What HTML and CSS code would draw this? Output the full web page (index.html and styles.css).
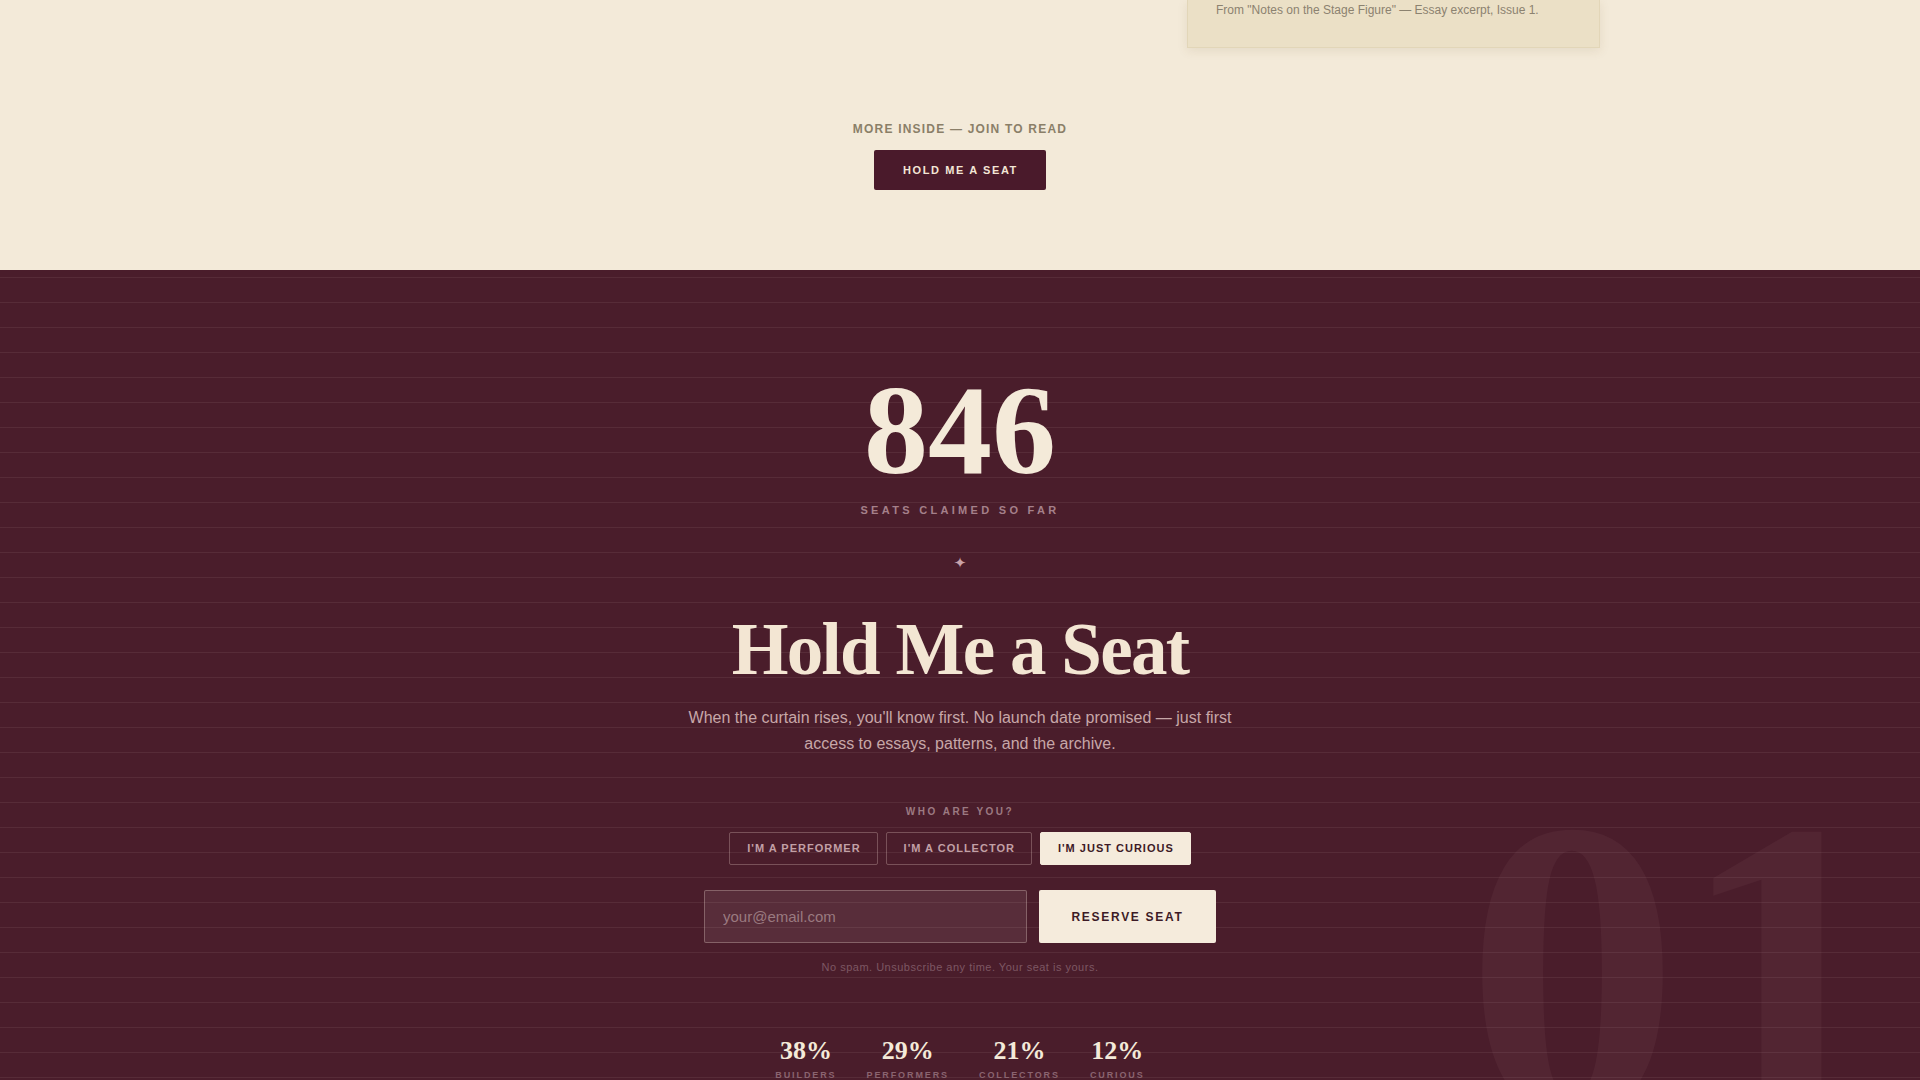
FILE: index.html
```html
<!DOCTYPE html>
<html lang="en">
<head>
    <meta charset="UTF-8">
    <meta name="viewport" content="width=device-width, initial-scale=1.0">
    <title>Hold Me a Seat</title>
    <link rel="stylesheet" href="styles.css">
</head>
<body>

    <section class="teaser">
        <div class="teaser-grid">
            <div class="teaser-copy"></div>
            <figure class="excerpt">
                <figcaption>From "Notes on the Stage Figure" — Essay excerpt, Issue 1.</figcaption>
            </figure>
        </div>

        <div class="teaser-cta">
            <p class="kicker">More inside — join to read</p>
            <a class="btn-dark" href="#seat">Hold me a seat</a>
        </div>
    </section>

    <section class="seat" id="seat">
        <span class="seat-watermark" aria-hidden="true">01</span>

        <div class="counter">846</div>
        <p class="counter-label">Seats claimed so far</p>
        <div class="ornament">✦</div>

        <h2 class="seat-title">Hold Me a Seat</h2>
        <p class="lede">When the curtain rises, you'll know first. No launch date promised — just first access to essays, patterns, and the archive.</p>

        <p class="who">Who are you?</p>
        <div class="roles">
            <button type="button" class="role">I'm a performer</button>
            <button type="button" class="role">I'm a collector</button>
            <button type="button" class="role active">I'm just curious</button>
        </div>

        <form class="signup" id="signup-form">
            <input type="email" name="email" placeholder="your@email.com" required>
            <button type="submit">Reserve seat</button>
        </form>
        <p class="fine">No spam. Unsubscribe any time. Your seat is yours.</p>

        <div class="stats">
            <div class="stat"><strong>38%</strong><span>Builders</span></div>
            <div class="stat"><strong>29%</strong><span>Performers</span></div>
            <div class="stat"><strong>21%</strong><span>Collectors</span></div>
            <div class="stat"><strong>12%</strong><span>Curious</span></div>
        </div>
    </section>

    <script>
        // toggle the selected role
        document.querySelectorAll('.role').forEach(function(btn) {
            btn.addEventListener('click', function() {
                document.querySelectorAll('.role').forEach(function(b) { b.classList.remove('active'); });
                btn.classList.add('active');
            });
        });

        document.getElementById('signup-form').addEventListener('submit', function(event) {
            event.preventDefault();
            this.reset();
        });
    </script>
</body>
</html>
```

FILE: styles.css
```css
body {
    margin: 0;
    padding: 0;
    font-family: "Liberation Sans", Arial, sans-serif;
    background-color: #f3ead9;
    overflow-x: hidden;
}

/* cream teaser area */
.teaser {
    padding-bottom: 80px;
}
.teaser-grid {
    width: 1280px;
    margin: 0 auto;
    display: grid;
    grid-template-columns: 1fr 413px;
}
.excerpt {
    margin: 0;
    background-color: #ebe0c6;
    border: 1px solid #e2d6b8;
    border-top: none;
    box-shadow: 0 3px 10px rgba(110, 80, 30, 0.10);
    padding: 2px 28px 29px;
}
.excerpt figcaption {
    font-size: 12px;
    line-height: 16px;
    color: #8b8270;
}
.teaser-cta {
    margin-top: 73px;
    display: flex;
    flex-direction: column;
    align-items: center;
}
.kicker {
    margin: 0 0 13px;
    font-size: 12px;
    line-height: 16px;
    font-weight: bold;
    letter-spacing: 1.2px;
    text-transform: uppercase;
    color: #8a7f68;
}
.btn-dark {
    display: block;
    padding: 14px 28px 14px 29px;
    line-height: 12px;
    background-color: #4a1a2b;
    color: #f3e6d6;
    border-radius: 2px;
    font-size: 11px;
    font-weight: bold;
    letter-spacing: 1.6px;
    text-transform: uppercase;
    text-decoration: none;
}

/* dark signup section */
.seat {
    position: relative;
    overflow: hidden;
    padding: 96px 0 120px;
    background-color: #4a1d2b;
    background-image: repeating-linear-gradient(to bottom, transparent 0, transparent 24px, rgba(255, 235, 225, 0.07) 24px, rgba(255, 235, 225, 0.07) 25px);
    background-position: 0 -17px;
    display: flex;
    flex-direction: column;
    align-items: center;
    text-align: center;
    color: #f3e6d3;
}
.seat-watermark {
    position: absolute;
    top: 486px;
    right: 28px;
    font-family: "Liberation Serif", "Times New Roman", serif;
    font-weight: bold;
    font-size: 426px;
    line-height: 1;
    color: rgba(243, 200, 200, 0.05);
    pointer-events: none;
}
.counter {
    position: relative;
    font-family: "Liberation Serif", "Times New Roman", serif;
    font-weight: bold;
    font-size: 128px;
    line-height: 128px;
    color: #f4ead9;
}
.counter-label {
    margin: 9px 0 0;
    font-size: 11px;
    line-height: 14px;
    font-weight: bold;
    letter-spacing: 3.3px;
    text-transform: uppercase;
    color: #a5808a;
}
.ornament {
    margin-top: 38px;
    font-family: "DejaVu Sans", sans-serif;
    font-size: 15px;
    line-height: 16px;
    color: #c9a3a9;
}
.seat-title {
    position: relative;
    margin: 43px 0 0;
    font-family: "Liberation Serif", "Times New Roman", serif;
    font-weight: bold;
    font-size: 73px;
    line-height: 72px;
    letter-spacing: -1.7px;
    color: #f3e6d3;
}
.lede {
    margin: 19px 0 0;
    max-width: 560px;
    font-size: 16px;
    line-height: 26px;
    color: #c7a7a8;
}
.who {
    margin: 48px 0 0;
    font-size: 10px;
    line-height: 13px;
    font-weight: bold;
    letter-spacing: 2.5px;
    text-transform: uppercase;
    color: #9c7a82;
}
.roles {
    margin-top: 14px;
    display: flex;
    gap: 8px;
}
.role {
    padding: 9px 16px 9px 17px;
    line-height: 13px;
    border: 1px solid rgba(243, 220, 210, 0.28);
    border-radius: 2px;
    background: transparent;
    font-family: "Liberation Sans", Arial, sans-serif;
    font-size: 11px;
    font-weight: bold;
    letter-spacing: 1px;
    text-transform: uppercase;
    color: #c2a0a6;
    cursor: pointer;
}
.role.active {
    background-color: #f5ebdc;
    border-color: #f5ebdc;
    color: #3d1a26;
}
.signup {
    position: relative;
    margin-top: 25px;
    display: flex;
    gap: 12px;
}
.signup input[type="email"] {
    width: 323px;
    height: 53px;
    box-sizing: border-box;
    padding: 0 18px;
    border: 1px solid rgba(243, 220, 210, 0.3);
    border-radius: 2px;
    background-color: rgba(255, 240, 240, 0.08);
    font-family: "Liberation Sans", Arial, sans-serif;
    font-size: 15px;
    color: #f3e6d3;
}
.signup input::placeholder {
    color: #9a7a80;
}
.signup button {
    width: 177px;
    height: 53px;
    border: none;
    border-radius: 2px;
    background-color: #f5ebdc;
    font-family: "Liberation Sans", Arial, sans-serif;
    font-size: 12px;
    font-weight: bold;
    letter-spacing: 1.7px;
    text-transform: uppercase;
    color: #3d1a26;
    cursor: pointer;
}
.fine {
    margin: 17px 0 0;
    font-size: 11px;
    line-height: 14px;
    letter-spacing: 0.5px;
    color: #7d5763;
}
.stats {
    position: relative;
    margin-top: 64px;
    display: flex;
    gap: 30px;
}
.stat {
    display: flex;
    flex-direction: column;
    align-items: center;
}
.stat strong {
    font-family: "Liberation Serif", "Times New Roman", serif;
    font-size: 26px;
    line-height: 26px;
    color: #f4ead9;
}
.stat span {
    margin-top: 5px;
    font-size: 9px;
    line-height: 12px;
    font-weight: bold;
    letter-spacing: 1.9px;
    text-transform: uppercase;
    color: #8a6470;
}
```
